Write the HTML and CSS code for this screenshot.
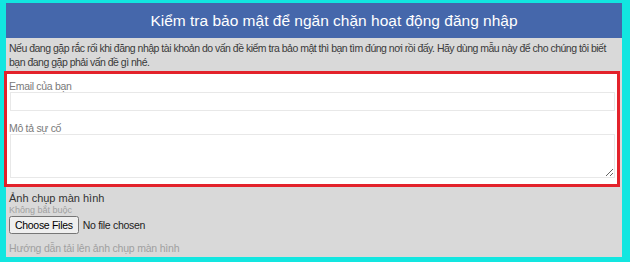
FILE: index.html
```html
<!DOCTYPE html>
<html>
<head>
  <title>Kiểm tra bảo mật</title>
  <link rel="stylesheet" href="styles.css">
</head>
<body>
<div class="panel">
  <div class="header">Kiểm tra bảo mật để ngăn chặn hoạt động đăng nhập</div>
  <div class="intro">Nếu đang gặp rắc rối khi đăng nhập tài khoản do vấn đề kiểm tra bảo mật thì bạn tìm đúng nơi rồi đấy. Hãy dùng mẫu này để cho chúng tôi biết bạn đang gặp phải vấn đề gì nhé.</div>
  <div class="form-box">
    <label class="field-label">Email của bạn</label>
    <input class="field-input" type="text">
    <label class="field-label">Mô tả sự cố</label>
    <textarea class="field-area"></textarea>
  </div>
  <div class="upload">
    <div class="upload-title">Ảnh chụp màn hình</div>
    <div class="upload-hint">Không bắt buộc</div>
    <input class="upload-file" type="file" multiple>
    <div class="upload-help">Hướng dẫn tải lên ảnh chụp màn hình</div>
  </div>
</div>
</body>
</html>
```

FILE: styles.css
```css
body {
    margin: 0;
    height: 262px;
    background-color: #12e6e0;
    font-family: "Liberation Sans", Arial, sans-serif;
    overflow: hidden;
}

.panel {
    margin: 3px 8px 0 6px;
    height: 254px;
    background-color: #d9d9d9;
    display: flex;
    flex-direction: column;
}

.header {
    flex-shrink: 0;
    height: 35px;
    display: flex;
    align-items: center;
    justify-content: center;
    padding-left: 40px;
    background-color: #4567ab;
    color: #ffffff;
    font-size: 15.5px;
}

.intro {
    flex-shrink: 0;
    padding: 3px 2px 2px 3px;
    font-size: 10.5px;
    letter-spacing: -0.5px;
    line-height: 14px;
    color: #3a3a3a;
}

.form-box {
    flex-shrink: 0;
    margin: 0 2px 0 -2px;
    border: 3px solid #e3222b;
    background-color: #ffffff;
    padding: 6px 2px 6px 2px;
    display: flex;
    flex-direction: column;
}

.field-label {
    font-size: 10.5px;
    letter-spacing: -0.3px;
    color: #7a7a7a;
    line-height: 12px;
}

.field-input {
    margin: 0 0 11px 1px;
    height: 17px;
    border: 1px solid #e8e8e8;
    padding: 0;
}

.field-area {
    margin: 0 0 0 1px;
    height: 42px;
    border: 1px solid #e8e8e8;
    padding: 0;
    resize: vertical;
}

.upload {
    flex-shrink: 0;
    padding: 5px 3px 0 3px;
    display: flex;
    flex-direction: column;
    align-items: flex-start;
}

.upload-title {
    font-size: 11px;
    color: #333333;
    line-height: 13px;
}

.upload-hint {
    font-size: 9px;
    color: #a0a0a0;
    line-height: 11px;
}

.upload-file {
    font-family: "Liberation Sans", Arial, sans-serif;
    font-size: 10.5px;
    letter-spacing: -0.3px;
    color: #222222;
    margin: 0;
}

.upload-file::file-selector-button {
    font-family: "Liberation Sans", Arial, sans-serif;
    font-size: 10.5px;
    letter-spacing: -0.3px;
    height: 18px;
    padding: 0 4px;
    margin-right: 4px;
}

.upload-help {
    margin-top: 8px;
    font-size: 10.5px;
    letter-spacing: -0.2px;
    line-height: 13px;
    color: #a0a0a0;
}
```
